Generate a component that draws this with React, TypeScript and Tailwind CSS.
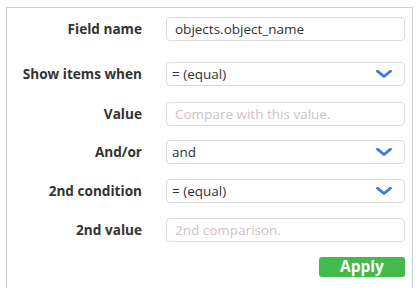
import React from 'react';

const Chevron = () => (
  <svg width="16" height="8" viewBox="0 0 16 8" className="shrink-0">
    <path d="M1.5 1.2 L8 6.5 L14.5 1.2" fill="none" stroke="#3b7ddd" strokeWidth="2.8" strokeLinecap="round" strokeLinejoin="round" />
  </svg>
);

const Label = ({ children }: { children: React.ReactNode }) => (
  <div className="w-[135px] shrink-0 text-right text-[13.6px] font-bold text-[#333]">{children}</div>
);

const TextInput = ({ value, placeholder }: { value?: string; placeholder?: string }) => (
  <div className="ml-[24px] flex h-[24px] w-[239px] items-center rounded-[4px] border border-[#dcdcdc] bg-white pl-[8px] text-[13.5px]">
    {value ? <span className="text-[#333]">{value}</span> : <span className="text-[#cdc3c8]">{placeholder}</span>}
  </div>
);

const Select = ({ value }: { value: string }) => (
  <div className="ml-[24px] flex h-[24px] w-[239px] items-center justify-between rounded-[4px] border border-[#dcdcdc] bg-white pl-[5px] pr-[12px] text-[13.5px] text-[#333]">
    <span>{value}</span>
    <Chevron />
  </div>
);

export default function App() {
  return (
    <div className="h-[288px] w-[419px] overflow-hidden bg-white pl-[6px] pt-[7px] font-['Open_Sans',sans-serif]">
      <div className="h-[300px] w-[407px] border-l border-t border-r border-[#cccccc] pt-[9px]">
        <div className="flex items-center">
          <Label>Field name</Label>
          <TextInput value="objects.object_name" />
        </div>
        <div className="mt-[21px] flex items-center">
          <Label>Show items when</Label>
          <Select value="= (equal)" />
        </div>
        <div className="mt-[16px] flex items-center">
          <Label>Value</Label>
          <TextInput placeholder="Compare with this value." />
        </div>
        <div className="mt-[14px] flex items-center">
          <Label>And/or</Label>
          <Select value="and" />
        </div>
        <div className="mt-[15px] flex items-center">
          <Label>2nd condition</Label>
          <Select value="= (equal)" />
        </div>
        <div className="mt-[15px] flex items-center">
          <Label>2nd value</Label>
          <TextInput placeholder="2nd comparison." />
        </div>
        <div className="mt-[15px] flex justify-end pr-[7px]">
          <button className="flex h-[20px] w-[86px] items-center justify-center rounded-[3px] bg-[#44b94c] text-[15.5px] font-bold text-white">
            Apply
          </button>
        </div>
      </div>
    </div>
  );
}
